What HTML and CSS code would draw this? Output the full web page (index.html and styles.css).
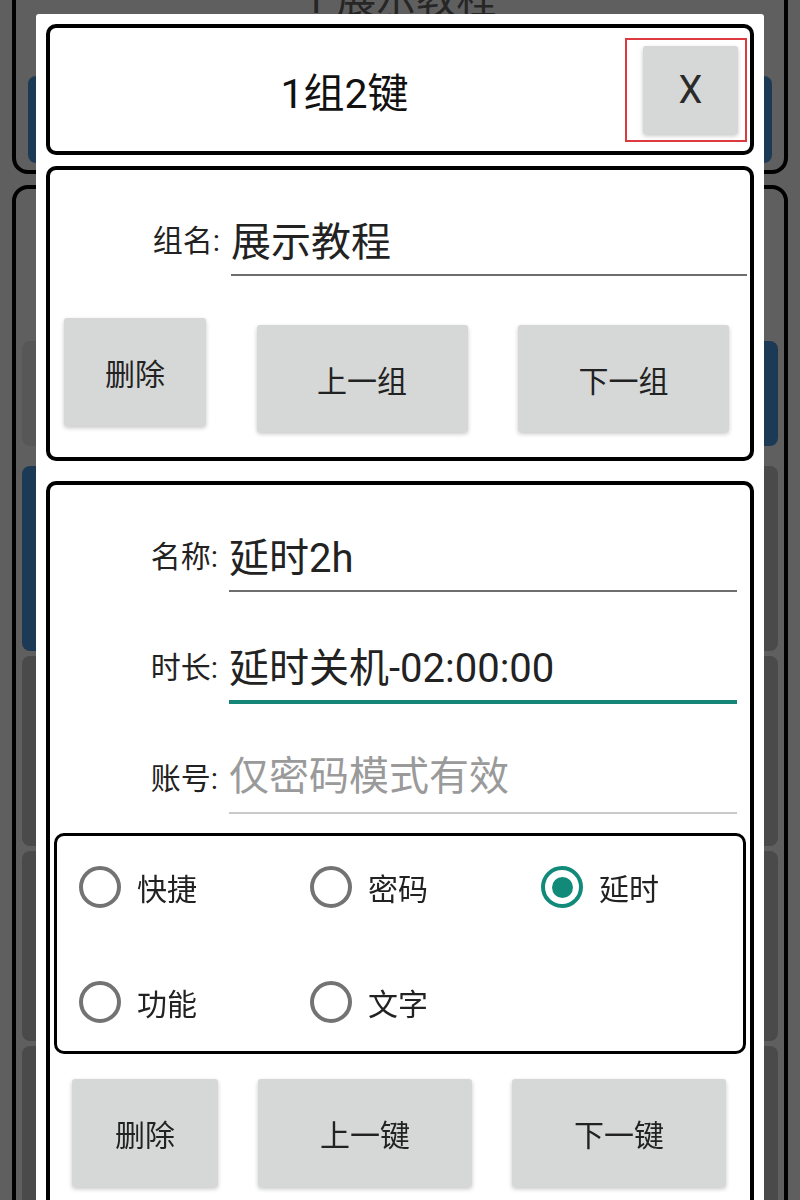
FILE: index.html
```html
<!DOCTYPE html>
<html lang="zh-CN">
<head>
    <meta charset="UTF-8">
    <meta name="viewport" content="width=device-width, initial-scale=1.0">
    <title>1组2键</title>
    <link rel="stylesheet" href="styles.css">
</head>
<body>
    <!-- сторінка під діалогом -->
    <div class="app">
        <div class="card card-top">
            <div class="card-title">1 展示教程</div>
            <div class="bg-bar"></div>
        </div>
        <div class="card card-main">
            <div class="bg-row row-short">
                <div class="bg-btn light"></div>
                <div class="bg-btn blue"></div>
            </div>
            <div class="bg-row row-tall">
                <div class="bg-btn blue"></div>
                <div class="bg-btn gray"></div>
            </div>
            <div class="bg-row">
                <div class="bg-btn gray"></div>
                <div class="bg-btn gray"></div>
            </div>
            <div class="bg-row">
                <div class="bg-btn gray"></div>
                <div class="bg-btn gray"></div>
            </div>
            <div class="bg-row">
                <div class="bg-btn gray"></div>
                <div class="bg-btn gray"></div>
            </div>
        </div>
    </div>

    <div class="mask"></div>

    <div class="dialog">
        <div class="box head">
            <div class="head-title">1组2键</div>
            <div class="close-wrap">
                <button class="btn close-btn">X</button>
            </div>
        </div>

        <div class="box group">
            <div class="form-row">
                <label class="label">组名:</label>
                <input class="field" value="展示教程">
            </div>
            <div class="btn-row group-btns">
                <button class="btn btn-del">删除</button>
                <button class="btn btn-nav offset">上一组</button>
                <button class="btn btn-nav offset">下一组</button>
            </div>
        </div>

        <div class="box keys">
            <div class="form-row">
                <label class="label">名称:</label>
                <input class="field" value="延时2h">
            </div>
            <div class="form-row">
                <label class="label">时长:</label>
                <input class="field focused" value="延时关机-02:00:00">
            </div>
            <div class="form-row">
                <label class="label">账号:</label>
                <input class="field empty" placeholder="仅密码模式有效">
            </div>

            <div class="radio-box">
                <div class="radio"><span class="dot"></span>快捷</div>
                <div class="radio"><span class="dot"></span>密码</div>
                <div class="radio on"><span class="dot"></span>延时</div>
                <div class="radio"><span class="dot"></span>功能</div>
                <div class="radio"><span class="dot"></span>文字</div>
            </div>

            <div class="btn-row key-btns">
                <button class="btn btn-del wide">删除</button>
                <button class="btn btn-nav wide">上一键</button>
                <button class="btn btn-nav wide">下一键</button>
            </div>
        </div>
    </div>
</body>
</html>
```

FILE: styles.css
```css
* {
    box-sizing: border-box;
}
body {
    margin: 0;
    height: 1200px;
    overflow: hidden;
    background: #fff;
    font-family: Roboto, "Noto Sans CJK SC", sans-serif;
    color: #222;
}

/* фон */
.app {
    padding: 0 12px;
}
.card {
    border: 4px solid #000;
    border-radius: 16px;
}
.card-top {
    margin-top: -28px;
    padding: 0 12px 7px;
}
.card-title {
    text-align: center;
    font-size: 40px;
    line-height: 48px;
    color: #666;
}
.bg-bar {
    margin-top: 52px;
    height: 87px;
    border-radius: 8px;
    background: #4b9be7;
}
.card-main {
    margin-top: 11px;
    padding: 152px 6px 0;
    height: 1200px;
}
.bg-row {
    display: flex;
    gap: 14px;
    height: 190px;
    margin-bottom: 5px;
}
.row-short {
    height: 105px;
    margin-bottom: 20px;
}
.row-tall {
    height: 185px;
}
.bg-btn {
    flex: 1;
    border-radius: 8px;
}
.bg-btn.gray {
    background: #c6c6c6;
}
.bg-btn.light {
    background: #e9e9e9;
}
.bg-btn.blue {
    background: #4b9be7;
}
.mask {
    position: fixed;
    top: 0;
    left: 0;
    right: 0;
    bottom: 0;
    background: rgba(0, 0, 0, 0.627);
}

/* діалог */
.dialog {
    position: absolute;
    top: 14px;
    left: 36px;
    width: 728px;
    height: 1260px;
    padding: 10px;
    background: #fff;
    border-radius: 3px;
}
.box {
    border: 4px solid #000;
    border-radius: 10px;
}
.head {
    height: 131px;
    display: flex;
    align-items: center;
    padding-right: 3px;
}
.head-title {
    flex: 1;
    padding-left: 14px;
    text-align: center;
    font-size: 41px;
    color: #111;
}
.close-wrap {
    border: 2px solid #dc3a3f;
    padding: 6px 7px 6px 16px;
}
.btn {
    border: none;
    border-radius: 3px;
    background: #d6d7d7;
    color: #222;
    font-family: inherit;
    font-size: 30px;
    box-shadow: 0 2px 4px rgba(0, 0, 0, 0.22);
    padding: 0;
}
.close-btn {
    display: block;
    width: 95px;
    height: 88px;
    font-size: 38px;
    color: #2a2a2a;
}

.group {
    margin-top: 11px;
    padding: 42px 0 25px;
}
.form-row {
    display: flex;
    align-items: center;
}
.group .form-row {
    padding-right: 3px;
}
.label {
    flex: none;
    text-align: right;
    padding: 0 11px 12px 0;
    font-size: 30px;
    color: #222;
}
.group .label {
    width: 181px;
}
.field {
    flex: 1;
    min-width: 0;
    height: 64px;
    padding: 0 0 9px;
    border: none;
    border-bottom: 2px solid #6e6e6e;
    background: transparent;
    outline: none;
    font-family: inherit;
    font-size: 40px;
    color: #222;
}
.field.focused {
    height: 66px;
    border-bottom: 4px solid #148577;
}
.field.empty {
    border-bottom-color: #c9c9c9;
}
.field::placeholder {
    color: #9a9a9a;
}
.btn-row {
    display: flex;
    justify-content: space-between;
    align-items: flex-start;
}
.group-btns {
    margin-top: 42px;
    padding: 0 21px 0 14px;
}
.btn-del {
    width: 142px;
    height: 108px;
}
.btn-nav {
    width: 211px;
    height: 107px;
}
.btn-nav.offset {
    margin-top: 7px;
}

.keys {
    margin-top: 20px;
    padding: 43px 0 40px;
    border-bottom: none;
}
.keys .form-row {
    padding-right: 13px;
}
.keys .form-row + .form-row {
    margin-top: 46px;
}
.keys .label {
    width: 179px;
}
.radio-box {
    margin: 19px 4px 0;
    border: 3px solid #000;
    border-radius: 10px;
    display: grid;
    grid-template-columns: repeat(3, 231px);
    row-gap: 55px;
    padding: 21px 0 19px 22px;
}
.radio {
    display: flex;
    align-items: center;
    gap: 16px;
    height: 60px;
    font-size: 30px;
    color: #222;
}
.dot {
    width: 42px;
    height: 42px;
    border: 4px solid #737373;
    border-radius: 50%;
    display: flex;
    align-items: center;
    justify-content: center;
}
.radio.on .dot {
    border-color: #128a7a;
}
.radio.on .dot::after {
    content: "";
    width: 21px;
    height: 21px;
    border-radius: 50%;
    background: #128a7a;
}
.key-btns {
    margin-top: 25px;
    padding: 0 24px 0 22px;
}
.btn.wide {
    height: 108px;
}
.btn-del.wide {
    width: 146px;
}
.btn-nav.wide {
    width: 214px;
}
```
